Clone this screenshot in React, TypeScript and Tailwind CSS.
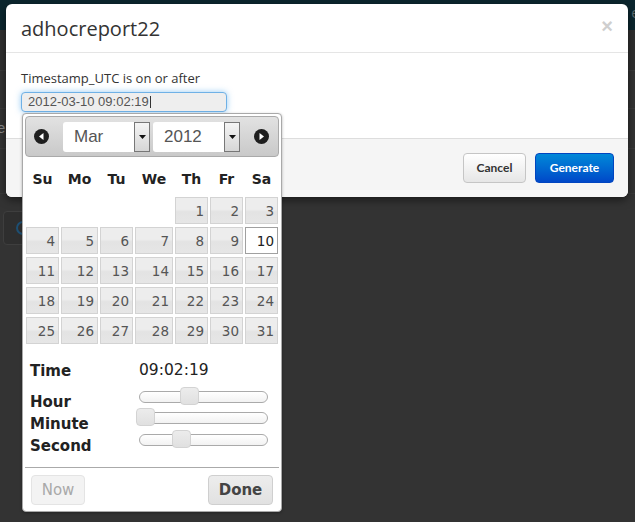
import React from "react";

const COLS = "grid-cols-[33px_37px_33px_38px_33px_33px_33px]";

function CircleArrow({ dir }: { dir: "l" | "r" }) {
  return (
    <svg width="15" height="15" viewBox="0 0 15 15">
      <circle cx="7.5" cy="7.5" r="7.5" fill="#1e1e1e" />
      {dir === "l" ? (
        <polygon points="9.5,4 9.5,11 5,7.5" fill="#fff" />
      ) : (
        <polygon points="5.5,4 5.5,11 10,7.5" fill="#fff" />
      )}
    </svg>
  );
}

function FakeSelect({ value }: { value: string }) {
  return (
    <div className="flex h-[30px] w-[87px] rounded-tl-[3px] rounded-bl-[3px] bg-white">
      <div className="flex flex-1 items-center pl-[11px] font-['Liberation_Sans',sans-serif] text-[17px] text-[#555]">
        {value}
      </div>
      <div className="flex w-[16px] items-center justify-center border border-[#777] bg-gradient-to-b from-[#f4f4f4] to-[#d6d6d6]">
        <svg width="7" height="4" viewBox="0 0 7 4">
          <polygon points="0,0 7,0 3.5,4" fill="#111" />
        </svg>
      </div>
    </div>
  );
}

function Slider({ pos }: { pos: number }) {
  return (
    <div className="relative h-[12px] w-[129px] rounded-full border border-[#aaa] bg-gradient-to-b from-white to-[#f2f2f2]">
      <div
        className="absolute top-[-5px] h-[18px] w-[19px] rounded-[4px] border border-[#d3d3d3] bg-gradient-to-b from-[#ececec] to-[#e0e0e0]"
        style={{ left: pos }}
      />
    </div>
  );
}

export default function App() {
  const cells: (number | null)[] = [null, null, null, null, 1, 2, 3];
  for (let d = 4; d <= 31; d++) cells.push(d);
  const dayNames = ["Su", "Mo", "Tu", "We", "Th", "Fr", "Sa"];

  return (
    <div className="relative h-[522px] w-[635px] overflow-hidden bg-[#333333] font-['Open_Sans',sans-serif]">
      {/* page behind the overlay */}
      <div className="h-[30px] bg-[#0b262e]">
        <div className="flex justify-end pt-[2px] text-[14px] text-[#5b6b70]">
          <span className="translate-x-[4px]">e</span>
        </div>
      </div>
      <div className="h-[41px] border-b border-[#3a3a3a] bg-[#2f2f2f]" />
      <div className="h-[38px] border-b border-[#3a3a3a]" />
      <div className="flex h-[40px] items-center border-b border-[#3a3a3a] font-['Liberation_Sans',sans-serif] text-[15px] text-[#8a8a8a]">
        <span className="-ml-[8px]">re</span>
      </div>
      <div className="flex h-[45px] items-center border-b border-[#3a3a3a] font-['Liberation_Sans',sans-serif] text-[15px] text-[#8a8a8a]">
        <span className="-ml-[8px]">ri</span>
      </div>
      <div className="ml-[3px] mt-[17px] flex h-[34px] w-[40px] items-center rounded-[4px] border border-[#3e3e3e] bg-[#2e2e2e] pl-[12px]">
        <div className="h-[14px] w-[14px] rounded-full border-2 border-[#1d4f73]" />
      </div>

      {/* modal */}
      <div className="absolute left-[6px] top-[4px] h-[193px] w-[622px] overflow-hidden rounded-[6px] bg-white shadow-[0_3px_8px_rgba(0,0,0,0.5)]">
        <div className="flex h-[49px] items-center justify-between border-b border-[#e5e5e5] pl-[15px] pr-[15px]">
          <div className="pt-[1px] text-[20px] text-[#333]">adhocreport22</div>
          <div className="-mt-[5px] font-['Liberation_Sans',sans-serif] text-[20px] font-bold leading-none text-[#cfcfcf]">
            ×
          </div>
        </div>
        <div className="h-[85px] px-[15px] pt-[16px]">
          <div className="text-[13px] leading-[18px] text-[#333]">Timestamp_UTC is on or after</div>
          <div className="mt-[5px] flex h-[20px] w-[206px] items-center rounded-[4px] border border-[#6fb1e6] bg-[#eeeeee] pl-[6px] font-['Liberation_Sans',sans-serif] text-[13px] text-[#555] shadow-[0_0_6px_rgba(82,168,236,0.6)]">
            2012-03-10 09:02:19
            <span className="ml-[1px] inline-block h-[12px] w-[1px] bg-[#333]" />
          </div>
        </div>
        <div className="flex h-[59px] items-center justify-end gap-[9px] border-t border-[#ddd] bg-[#f5f5f5] pr-[14px]">
          <div className="flex h-[30px] w-[63px] items-center justify-center rounded-[4px] border border-[#c5c5c5] bg-gradient-to-b from-white to-[#e6e6e6] font-['Lato',sans-serif] text-[12px] font-bold text-[#333]">
            Cancel
          </div>
          <div className="flex h-[30px] w-[79px] items-center justify-center rounded-[4px] border border-[#0045c0] bg-gradient-to-b from-[#0088d8] to-[#0047c8] font-['Lato',sans-serif] text-[12px] font-bold text-white">
            Generate
          </div>
        </div>
      </div>

      {/* datepicker */}
      <div className="absolute left-[22px] top-[113px] h-[399px] w-[260px] rounded-[4px] border border-[#a9a9a9] bg-white p-[2px] font-['DejaVu_Sans',sans-serif] shadow-[0_1px_3px_rgba(0,0,0,0.3)]">
        <div className="flex h-[41px] items-center rounded-[4px] border border-[#aaa] bg-gradient-to-b from-[#e2e2e2] to-[#c9c9c9]">
          <div className="ml-[8px] flex">
            <CircleArrow dir="l" />
          </div>
          <div className="ml-[14px] flex gap-[3px]">
            <FakeSelect value="Mar" />
            <FakeSelect value="2012" />
          </div>
          <div className="ml-[14px] flex">
            <CircleArrow dir="r" />
          </div>
        </div>

        <div className={`ml-[1px] mt-[12px] grid h-[20px] ${COLS} gap-x-[2px]`}>
          {dayNames.map((d) => (
            <div key={d} className="text-center text-[14px] font-bold leading-[20px] text-[#222]">
              {d}
            </div>
          ))}
        </div>

        <div className={`ml-[1px] mt-[8px] grid ${COLS} gap-x-[2px] gap-y-[3px]`}>
          {cells.map((c, i) =>
            c === null ? (
              <div key={i} className="h-[27px]" />
            ) : c === 10 ? (
              <div
                key={i}
                className="flex h-[27px] items-center justify-end border border-[#a0a0a0] bg-white pr-[3px] pt-[2px] text-[13.5px] text-[#212121]"
              >
                {c}
              </div>
            ) : (
              <div
                key={i}
                className="flex h-[27px] items-center justify-end border border-[#d3d3d3] bg-[linear-gradient(to_bottom,#ededed_0%,#ededed_45%,#e3e3e3_55%,#e6e6e6_100%)] pr-[3px] pt-[2px] text-[13.5px] text-[#555]"
              >
                {c}
              </div>
            )
          )}
        </div>

        <div className="mt-[16px] flex h-[22px] items-center">
          <div className="w-[114px] pl-[5px] text-[15px] font-bold text-[#222]">Time</div>
          <div className="text-[15.5px] text-[#222]">09:02:19</div>
        </div>
        <div className="mt-[8px] flex h-[22px]">
          <div className="w-[114px] pl-[5px] pt-[1px] text-[15px] font-bold leading-[22px] text-[#222]">Hour</div>
          <div className="pt-[1px]">
            <Slider pos={40} />
          </div>
        </div>
        <div className="flex h-[22px]">
          <div className="w-[114px] pl-[5px] pt-[1px] text-[15px] font-bold leading-[22px] text-[#222]">Minute</div>
          <div>
            <Slider pos={-4} />
          </div>
        </div>
        <div className="flex h-[22px]">
          <div className="w-[114px] pl-[5px] pt-[1px] text-[15px] font-bold leading-[22px] text-[#222]">Second</div>
          <div>
            <Slider pos={32} />
          </div>
        </div>

        <div className="mt-[11px] border-t border-[#aaa]" />
        <div className="mt-[7px] flex justify-between px-[6px]">
          <div className="flex h-[30px] w-[54px] items-center justify-center rounded-[4px] border border-[#e4e4e4] bg-[#f3f3f3] text-[15px] text-[#a9a9a9]">
            Now
          </div>
          <div className="flex h-[30px] w-[65px] items-center justify-center rounded-[4px] border border-[#cfcfcf] bg-gradient-to-b from-[#ededed] to-[#e1e1e1] text-[15px] font-bold text-[#444]">
            Done
          </div>
        </div>
      </div>
    </div>
  );
}
